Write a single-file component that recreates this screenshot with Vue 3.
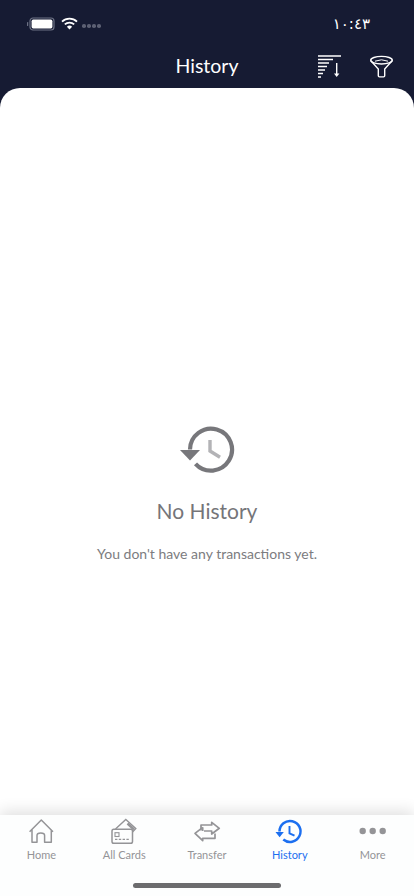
<script setup>
const tabs = [
  { key: 'home', label: 'Home' },
  { key: 'cards', label: 'All Cards' },
  { key: 'transfer', label: 'Transfer' },
  { key: 'history', label: 'History', active: true },
  { key: 'more', label: 'More' }
];
</script>

<template>
  <div class="page">
    <header class="top">
      <div class="status">
        <div class="status__left">
          <svg class="battery" width="28" height="14" viewBox="0 0 28 14">
            <rect x="3" y="1" width="24" height="12" rx="3" fill="none" stroke="#6d7285" stroke-width="1.2" />
            <rect x="4.6" y="2.6" width="20.8" height="8.8" rx="1.6" fill="#fff" />
            <rect x="0" y="5" width="1.2" height="4" rx="0.6" fill="#6d7285" />
          </svg>
          <svg class="wifi" width="17" height="13" viewBox="0 0 17 13">
            <path d="M1 4.6 A11 11 0 0 1 16 4.6" fill="none" stroke="#fff" stroke-width="1.8" />
            <path d="M3.8 7.4 A7 7 0 0 1 13.2 7.4" fill="none" stroke="#fff" stroke-width="1.8" />
            <path d="M8.5 12.6 L5.9 9.8 A3.6 3.6 0 0 1 11.1 9.8 Z" fill="#fff" />
          </svg>
          <div class="dots"><i></i><i></i><i></i><i></i></div>
        </div>
        <div class="clock">١٠:٤٣</div>
      </div>
      <div class="bar">
        <div class="bar__title">History</div>
        <div class="bar__actions">
          <svg width="25" height="24" viewBox="0 0 25 24" fill="none" stroke="#fff">
            <path d="M0 1h23M0 4.5h15M0 8h11M0 11.5h9M0 15h7M0 18.5h5M0 22h3" stroke-width="1.3" />
            <path d="M18.7 8v12" stroke-width="1.4" />
            <path d="M16 18.5l2.7 3.5 2.7-3.5z" fill="#fff" stroke="none" />
          </svg>
          <svg width="24" height="23" viewBox="0 0 24 23" fill="none" stroke="#fff" stroke-width="1.4">
            <ellipse cx="11.5" cy="5.2" rx="10.8" ry="3.8" />
            <path d="M0.9 5.8 L8.3 14 V20.8 Q8.3 21.9 9.4 21.9 H13.6 Q14.7 21.9 14.7 20.8 V14 L22.1 5.8" />
            <path d="M5 6.2 Q11.5 3.4 18 6.2" stroke-width="1" />
          </svg>
        </div>
      </div>
    </header>

    <main class="content">
      <svg class="content__icon" width="56" height="50" viewBox="0 0 56 50" fill="none">
        <path d="M11 24.5 A21 21 0 1 1 16.5 38.8" stroke="#77777b" stroke-width="4.2" />
        <path d="M1 25 H21 L11 35.5 Z" fill="#77777b" />
        <path d="M31 15 V26 L41 32.3" stroke="#b3b3b6" stroke-width="3.4" />
      </svg>
      <h1 class="content__title">No History</h1>
      <p class="content__text">You don't have any transactions yet.</p>
    </main>

    <nav class="tabs">
      <div class="tabs__row">
        <div v-for="tab in tabs" :key="tab.key" class="tab" :class="{ 'tab--active': tab.active }">
          <svg class="tab__icon" width="34" height="28" viewBox="0 0 34 28" fill="none" stroke="currentColor">
            <template v-if="tab.key === 'home'">
              <path d="M5.6 14.7 L17.3 3 L29 14.7 M8 12.5 V25.3 H13 V18.5 Q13 16 16.8 16 Q20.6 16 20.6 18.5 V25.3 H27.3 V12.5" stroke-width="1.5" stroke-linejoin="round" />
            </template>
            <template v-else-if="tab.key === 'cards'">
              <rect x="5" y="12.3" width="20.5" height="14" rx="1.8" stroke-width="1.5" />
              <path d="M8.5 12 L18.8 2.5 L28.8 11.5 L25.5 15" stroke-width="1.4" />
              <path d="M20.5 6.5 L27 12.5" stroke-width="2.4" />
              <rect x="8" y="15.7" width="4" height="3.8" stroke-width="1.1" />
              <path d="M8 22.3 H23" stroke-width="1.2" stroke-dasharray="2.4 1.4" />
            </template>
            <template v-else-if="tab.key === 'transfer'">
              <path d="M11 13.5 V8 H21.7 V5.3 L29.3 11.3 L21.7 17 V14 H14" stroke-width="1.7" stroke-linejoin="round" />
              <path d="M12.7 10.3 L5 16.3 L12.7 23.7 V21.3 H25 V16.5" stroke-width="1.7" stroke-linejoin="round" />
              <path d="M12.7 10.3 V14" stroke-width="1.7" />
            </template>
            <template v-else-if="tab.key === 'history'">
              <path d="M6.5 14.5 A10.5 10.5 0 1 1 10.3 22.5" stroke-width="2.5" />
              <path d="M2.5 15 H10.8 L6.6 20.3 Z" fill="currentColor" stroke="none" />
              <path d="M16.5 9 V16.3 L21.5 18.7" stroke-width="1.9" />
            </template>
            <template v-else>
              <circle cx="6.7" cy="14" r="3.2" fill="currentColor" stroke="none" />
              <circle cx="16.7" cy="14" r="3.2" fill="currentColor" stroke="none" />
              <circle cx="26.7" cy="14" r="3.2" fill="currentColor" stroke="none" />
            </template>
          </svg>
          <span class="tab__label">{{ tab.label }}</span>
        </div>
      </div>
      <div class="home-bar"></div>
    </nav>
  </div>
</template>

<style scoped>
.page {
  width: 414px;
  height: 896px;
  display: flex;
  flex-direction: column;
  overflow: hidden;
  background: #161b33;
  font-family: Lato, "Noto Sans", sans-serif;
}

.top {
  flex: none;
  height: 88px;
  display: flex;
  flex-direction: column;
  color: #fff;
}

.status {
  height: 47px;
  padding: 0 44px 0 27px;
  display: flex;
  justify-content: space-between;
  align-items: center;
}

.status__left {
  display: flex;
  align-items: center;
  gap: 6px;
}

.dots {
  display: flex;
  gap: 1.5px;
  margin: 5px 0 0 -2px;
}

.dots i {
  width: 3.5px;
  height: 3.5px;
  border-radius: 50%;
  background: #5c6073;
}

.clock {
  font-family: "DejaVu Sans", sans-serif;
  font-size: 15px;
}

.bar {
  height: 40px;
  padding: 0 20px 0 0;
  display: grid;
  grid-template-columns: 1fr auto 1fr;
  align-items: center;
}

.bar__title {
  grid-column: 2;
  margin: -4px 0 0 20px;
  font-size: 19.5px;
}

.bar__actions {
  justify-self: end;
  display: flex;
  gap: 27px;
  margin-top: -1px;
}

.content {
  flex: 1;
  background: #fff;
  border-radius: 20px 20px 0 0;
  display: flex;
  flex-direction: column;
  align-items: center;
  padding-top: 337px;
  box-sizing: border-box;
}

.content__title {
  margin: 23px 0 0;
  font-size: 21px;
  font-weight: 400;
  color: #757579;
}

.content__text {
  margin: 22px 0 0;
  font-size: 14px;
  color: #7c7c80;
}

.tabs {
  flex: none;
  height: 81px;
  box-sizing: border-box;
  padding-bottom: 8px;
  display: flex;
  flex-direction: column;
  background: #fdfefe;
  box-shadow: 0 -4px 14px rgba(0, 0, 0, 0.12);
}

.tabs__row {
  display: grid;
  grid-template-columns: repeat(5, 1fr);
  padding: 2px 0 0;
}

.tab {
  display: flex;
  flex-direction: column;
  align-items: center;
  color: #949497;
}

.tab--active {
  color: #1c6ff0;
}

.tab__label {
  margin-top: 3px;
  font-size: 11px;
}

.home-bar {
  margin: auto 0 0 133px;
  width: 148px;
  height: 5px;
  border-radius: 3px;
  background: #6c6c6e;
}
</style>
